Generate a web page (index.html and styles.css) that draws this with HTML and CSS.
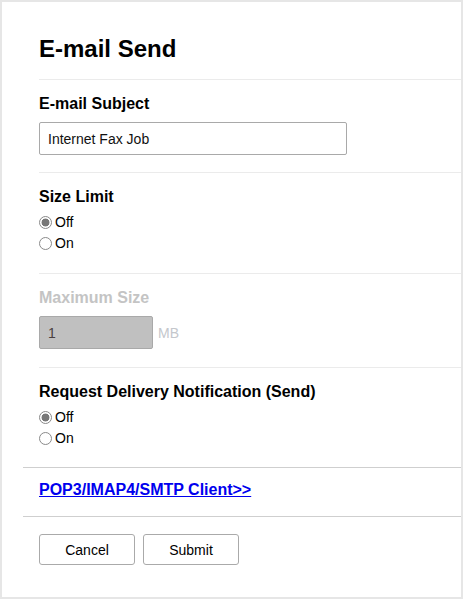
FILE: index.html
```html
<!DOCTYPE html>
<html lang="en">
<head>
<meta charset="utf-8">
<title>E-mail Send</title>
<link rel="stylesheet" href="styles.css">
</head>
<body>
<div class="panel">
  <h1 class="title">E-mail Send</h1>

  <section class="field field-text">
    <div class="label">E-mail Subject</div>
    <input class="textbox subject" type="text" value="Internet Fax Job">
  </section>

  <section class="field field-radio">
    <div class="label">Size Limit</div>
    <label class="radio-row"><input type="radio" name="limit" checked><span>Off</span></label>
    <label class="radio-row"><input type="radio" name="limit"><span>On</span></label>
  </section>

  <section class="field field-text field-disabled">
    <div class="label label-disabled">Maximum Size</div>
    <div class="inline">
      <input class="textbox size" type="text" value="1" disabled>
      <span class="unit">MB</span>
    </div>
  </section>

  <section class="field field-radio field-last">
    <div class="label">Request Delivery Notification (Send)</div>
    <label class="radio-row"><input type="radio" name="notify" checked><span>Off</span></label>
    <label class="radio-row"><input type="radio" name="notify"><span>On</span></label>
  </section>

  <div class="link-row">
    <a class="link" href="#">POP3/IMAP4/SMTP Client&gt;&gt;</a>
  </div>

  <div class="actions">
    <button class="btn" type="button">Cancel</button>
    <button class="btn" type="button">Submit</button>
  </div>
</div>
</body>
</html>
```

FILE: styles.css
```css
html, body {
  margin: 0;
  padding: 0;
}

body {
  background: #e6e6e6;
  font-family: "Liberation Sans", Arial, sans-serif;
  color: #000;
}

.panel {
  margin: 2px;
  height: 595px;
  background: #fff;
  padding-top: 33px;
  box-sizing: border-box;
  overflow: hidden;
}

.title {
  margin: 0 0 16px 37px;
  font-size: 24px;
  line-height: 28px;
  font-weight: bold;
}

.field {
  margin-left: 37px;
  border-top: 1px solid #ebebeb;
  padding-top: 15px;
}

.field-text {
  padding-bottom: 17px;
}

.field-disabled {
  padding-bottom: 18px;
}

.field-radio {
  padding-bottom: 19px;
}

.field-last {
  padding-bottom: 18px;
}

.label {
  font-size: 16px;
  line-height: 18px;
  font-weight: bold;
}

.label-disabled {
  color: #c4c4c4;
}

.textbox {
  display: block;
  margin: 9px 0 0 0;
  box-sizing: border-box;
  height: 33px;
  padding: 0 8px;
  border: 1px solid #a9a9a9;
  border-radius: 2px;
  font-family: "Liberation Sans", Arial, sans-serif;
  font-size: 14px;
  color: #111;
  background: #fff;
  outline: none;
}

.subject {
  width: 308px;
}

.inline {
  display: flex;
  align-items: center;
  gap: 5px;
  margin-top: 9px;
}

.inline .textbox {
  margin: 0;
}

.size {
  width: 114px;
  background: #c0c0c0;
  color: #4a4040;
  border-color: #a9a9a9;
}

.unit {
  font-size: 14px;
  color: #c4c7cc;
}

.radio-row {
  display: flex;
  align-items: center;
  height: 21px;
  font-size: 14px;
  line-height: 21px;
}

.field-radio .label + .radio-row {
  margin-top: 6px;
}

.radio-row input {
  appearance: none;
  -webkit-appearance: none;
  width: 13px;
  height: 13px;
  margin: 0 3px 0 0;
  border: 1px solid #8a8a8a;
  border-radius: 50%;
  background: #fff;
  box-sizing: border-box;
  flex: none;
}

.radio-row input:checked {
  border-color: #8a8a8a;
  background: radial-gradient(circle, #777 0 3.6px, #fff 4.3px);
}

.link-row {
  margin-left: 21px;
  padding: 13px 0 17px 16px;
  border-top: 1px solid #cfcfcf;
}

.link {
  font-size: 16px;
  line-height: 18px;
  font-weight: bold;
  color: #0000ee;
  text-decoration: underline;
  display: inline-block;
}

.actions {
  margin-left: 21px;
  padding: 17px 0 0 16px;
  border-top: 1px solid #cfcfcf;
  display: flex;
  gap: 8px;
}

.btn {
  width: 96px;
  height: 31px;
  padding: 0;
  background: #fff;
  border: 1px solid #aaa;
  border-radius: 3px;
  font-family: "Liberation Sans", Arial, sans-serif;
  font-size: 14px;
  color: #000;
}
```
